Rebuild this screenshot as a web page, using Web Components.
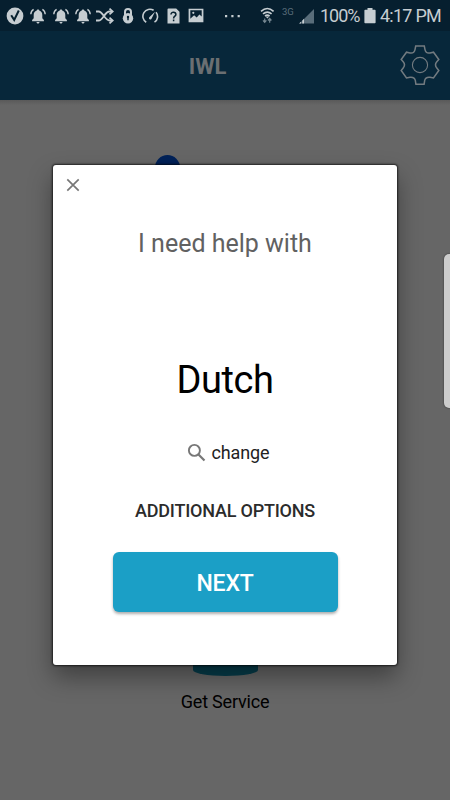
<!DOCTYPE html>
<html lang="en">
<head>
<meta charset="utf-8">
<title>IWL</title>
<style>
html,body{margin:0;height:100%;overflow:hidden}
body{font-family:Roboto,"Noto Sans",sans-serif;background:#666}
</style>
</head>
<body>
<iwl-screen></iwl-screen>
<script>
const define = (name, html) => customElements.define(name, class extends HTMLElement {
  constructor() {
    super();
    const t = document.createElement('template');
    t.innerHTML = html;
    this.attachShadow({mode: 'open'}).append(t.content.cloneNode(true));
  }
});

const icons = {
  check: [18, 18, '<circle cx="9" cy="9" r="8.4" fill="currentColor"/><path d="M5.2 8.2l3 4.700 4.600-9.400" fill="none" stroke="#06202f" stroke-width="2"/>'],
  bell: [16, 16, '<path d="M8 1.4c-.8 0-1.200.4-1.200 1C4.600 3 3.700 4.800 3.700 7v3.200L2.100 12v1.200h11.800V12l-1.600-1.800V7c0-2.200-.9-4-3.100-4.600 0-.6-.4-1-1.200-1zM6.500 14h3c0 .9-.6 1.500-1.500 1.500S6.500 14.900 6.500 14z" fill="currentColor"/><path d="M3.600 1.300C1.800 2.300.9 4 .8 6.300M12.400 1.300c1.800 1 2.700 2.700 2.800 5" fill="none" stroke="currentColor" stroke-width="1.400"/>'],
  shuffle: [18, 16, '<path d="M0 3.500h2.600c4.500 0 6 9 11 9H16M0 12.500h2.600c4.500 0 6-9 11-9H16" fill="none" stroke="currentColor" stroke-width="1.800"/><path d="M13.500.6l3.300 2.900-3.300 2.900M13.500 9.600l3.300 2.900-3.300 2.900" fill="none" stroke="currentColor" stroke-width="1.700"/>'],
  lock: [12, 16, '<path d="M3 7.500V4a3 3 0 016 0v3.500" fill="none" stroke="currentColor" stroke-width="2"/><circle cx="6" cy="10.300" r="5.200" fill="currentColor"/><path d="M6 8.300v4" stroke="#06202f" stroke-width="1.500"/><circle cx="6" cy="9" r="1.200" fill="#06202f"/>'],
  gauge: [17, 16, '<path d="M4.200 14.200A6.800 6.800 0 0111.600 2.300M14 4.200a6.800 6.800 0 01-1.500 10" fill="none" stroke="currentColor" stroke-width="1.600"/><path d="M7.300 9.300L13 3.700 9.400 11c-1.300 1.300-3.200 0-2.100-1.700z" fill="currentColor"/>'],
  doc: [13, 16, '<path d="M1.500.5h7.700l3.300 3.300v11.700h-12V1.500a1 1 0 011-1z" fill="currentColor"/><path d="M4 6.400c0-3 4.900-2.800 4.900.1 0 1.700-2.300 1.700-2.300 3.900M6.600 11.600v1.700" fill="none" stroke="#06202f" stroke-width="1.500"/>'],
  image: [16, 15, '<path fill-rule="evenodd" d="M.6.7h14.800v13.600H.6zM2.300 2.300v8.500l3.800-3.500 2.600 2.200 2.700-3 2.300 2V2.300z" fill="currentColor"/><circle cx="5.300" cy="4.800" r="1.100" fill="currentColor"/>'],
  dots: [17, 4, '<path d="M1 1h2.200v2.200H1zM7.300 1h2.200v2.200H7.300zM13.600 1h2.200v2.200h-2.200z" fill="currentColor"/>'],
  wifi: [15, 17, '<path d="M1 4.400Q7.300-1.400 13.600 4.400M3 6.900q4.300-3.700 8.600 0M5 9q2.300-1.700 4.600 0" fill="none" stroke="currentColor" stroke-width="1.600"/><path d="M5.600 9.400h3.600l-1.800 2z" fill="currentColor"/><path d="M4.700 11.500v4M3 13.300l1.700 2 1.700-2M9.700 15.800v-4M8 13.500l1.700-2 1.700 2" fill="none" stroke="#788993" stroke-width="1.200"/>'],
  signal: [16, 16, '<path d="M.5 15.500L15 1v14.500z" fill="#596d7a"/><path d="M0 15.500l2-1.800v1.800zM3.300 15.500v-3l1.700-1.800v4.800z" fill="currentColor"/>'],
  battery: [12, 16, '<path d="M3.500 0h5v1.700h2.300q.8 0 .8.8v12q0 .8-.8.800H1.200q-.8 0-.8-.8v-12q0-.8.8-.8h2.300z" fill="currentColor"/>'],
  gear: [40, 41, '<path d="M15.700 1h8.600l.7 3.600q.9 4.100 5 3.400l3.500-.8 5.300 7.300-2 2.300q-2.600 3.100 0 6.200l2 2.500-5.300 7.400-3.500-.7q-4.600-.5-5.300 3.200l-.6 3.800h-8.200l-.6-3.800q-.7-3.700-5.300-3.200l-3.500.7-5.300-7.400 2-2.500q2.600-3.100 0-6.200l-2-2.300 5.300-7.300 3.500.8q4.100.7 5-3.400z" fill="none" stroke="currentColor" stroke-width="1.500"/><circle cx="20" cy="20" r="7.600" fill="none" stroke="currentColor" stroke-width="1.100"/>'],
  close: [14, 14, '<path d="M1.300 1.300l11.400 11.400M12.700 1.300L1.300 12.700" fill="none" stroke="currentColor" stroke-width="1.700"/>'],
  search: [20, 20, '<circle cx="7.400" cy="7.400" r="5.500" fill="none" stroke="currentColor" stroke-width="1.900"/><path d="M11.500 11.500l6 6" stroke="currentColor" stroke-width="2.200"/>']
};
customElements.define('iwl-icon', class extends HTMLElement {
  constructor() { super(); this.attachShadow({mode: 'open'}); }
  connectedCallback() {
    const [w, h, body] = icons[this.getAttribute('name')];
    this.shadowRoot.innerHTML = `<style>:host{display:block;flex:none;width:${w}px;height:${h}px}svg{display:block}</style><svg width="${w}" height="${h}" viewBox="0 0 ${w} ${h}">${body}</svg>`;
  }
});

define('status-bar', `<style>
:host{display:flex;height:31px;box-sizing:border-box;align-items:center;padding-left:6px;background:#061f2f;color:#c6cdd1;white-space:nowrap}
.net{font-size:9.500px;color:#596d7a;margin:-9px 5px 0 7px;width:12px}
.pct{font-size:18px;width:40px;letter-spacing:-1px;margin-left:5px}
.time{font-size:18px;letter-spacing:-.75px;margin-left:4px}
</style>
<iwl-icon name="check"></iwl-icon>
<iwl-icon name="bell" style="margin-left:6px"></iwl-icon>
<iwl-icon name="bell" style="margin-left:7px"></iwl-icon>
<iwl-icon name="bell" style="margin-left:6px"></iwl-icon>
<iwl-icon name="shuffle" style="margin-left:5px"></iwl-icon>
<iwl-icon name="lock" style="margin-left:8px"></iwl-icon>
<iwl-icon name="gauge" style="margin-left:8px"></iwl-icon>
<iwl-icon name="doc" style="margin-left:8px"></iwl-icon>
<iwl-icon name="image" style="margin-left:8px"></iwl-icon>
<iwl-icon name="dots" style="margin-left:20px"></iwl-icon>
<iwl-icon name="wifi" style="margin-left:19px"></iwl-icon>
<span class="net">3G</span>
<iwl-icon name="signal"></iwl-icon>
<span class="pct">100%</span>
<iwl-icon name="battery" style="margin-left:4px"></iwl-icon>
<span class="time">4:17 PM</span>`);

define('title-bar', `<style>
:host{display:grid;grid-template-columns:1fr auto 1fr;align-items:center;height:69px;box-sizing:border-box;padding:0 10px 0 0;background:#07273a;color:#737b80}
h1{margin:0;padding:2px 25px 0 0;font:700 22px/30px Roboto,sans-serif;grid-column:2;color:#6b6f72}
iwl-icon{justify-self:end}
</style><h1><slot></slot></h1><iwl-icon name="gear"></iwl-icon>`);

define('home-page', `<style>
:host{display:flex;flex-direction:column;flex:1;align-items:center;background:linear-gradient(#595959,#666 5px);color:#000}
.globe{width:25px;height:25px;border-radius:50%;background:#002158;margin:55px 115px 0 0}
.bowl{width:65px;height:30px;margin-top:466px;background:#063d4b;border-radius:0 0 50% 50% / 0 0 6px 6px}
.label{font-size:18px;line-height:24px;margin-top:14px;letter-spacing:-.2px}
</style><div class="globe"></div><div class="bowl"></div><div class="label"><slot></slot></div>`);

define('next-button', `<style>
:host{display:block}
button{display:block;width:225px;height:60px;border:0;padding:3px 0 0;border-radius:6px;background:#1b9fc6;color:#fff;font:500 23px/57px Roboto,sans-serif;letter-spacing:-.2px;box-shadow:0 2px 3px rgba(0,0,0,.32)}
</style><button><slot></slot></button>`);

define('language-dialog', `<style>
:host{display:flex;flex-direction:column;align-items:center;box-sizing:border-box;width:344px;height:500px;border-radius:3px;background:#fff;box-shadow:0 0 2px 1px rgba(0,0,0,.65),0 12px 24px rgba(0,0,0,.38)}
.close{align-self:flex-start;margin:13px 0 0 13px;color:#777}
.lead{margin-top:36px;font-size:25px;line-height:32px;color:#616161}
.lang{margin-top:96px;font-size:38px;line-height:48px;letter-spacing:-.4px;color:#000}
.change{display:flex;align-items:center;gap:5px;padding-left:6px;margin-top:37px;font-size:18px;line-height:24px;letter-spacing:-.15px;color:#222}
.change iwl-icon{color:#777}
.options{margin-top:34px;font-size:18px;font-weight:500;line-height:24px;letter-spacing:-.22px;color:#2b2b2b}
next-button{margin-top:29px}
</style>
<iwl-icon class="close" name="close"></iwl-icon>
<div class="lead">I need help with</div>
<div class="lang"><slot></slot></div>
<div class="change"><iwl-icon name="search"></iwl-icon><span>change</span></div>
<div class="options">ADDITIONAL OPTIONS</div>
<next-button>NEXT</next-button>`);

define('iwl-screen', `<style>
:host{display:flex;flex-direction:column;position:relative;width:450px;height:800px;overflow:hidden}
.overlay{position:absolute;inset:0;display:flex;justify-content:center;align-items:flex-start;padding-top:165px}
.handle{position:absolute;right:0;top:254px;width:6px;height:154px;border-radius:5px 0 0 5px;background:#ccc;box-shadow:0 0 2px rgba(0,0,0,.6)}
</style>
<status-bar></status-bar>
<title-bar>IWL</title-bar>
<home-page>Get Service</home-page>
<div class="overlay"><language-dialog>Dutch</language-dialog></div>
<div class="handle"></div>`);
</script>
</body>
</html>
